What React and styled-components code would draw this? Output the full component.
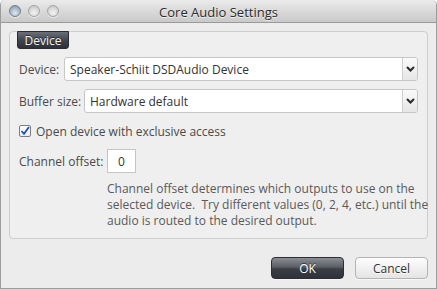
import React from "react";
import styled, { createGlobalStyle } from "styled-components";

const Global = createGlobalStyle`
  html, body { margin: 0; padding: 0; background: #ffffff; }
  body { font-family: "Open Sans", "DejaVu Sans", sans-serif; }
  * { box-sizing: border-box; }
`;

const Window = styled.div`
  width: 437px;
  height: 289px;
  display: flex;
  flex-direction: column;
  background: #ececec;
  border: 1px solid #9c9c9c;
  border-top: none;
  border-radius: 5px 5px 0 0;
  overflow: hidden;
`;

const TitleBar = styled.div`
  position: relative;
  height: 23px;
  flex: none;
  display: flex;
  align-items: center;
  justify-content: center;
  background: linear-gradient(#ebebeb, #d6d6d6 60%, #c9c9c9);
  border-bottom: 1px solid #9a9a9a;
`;

const Lights = styled.div`
  position: absolute;
  left: 8px;
  top: 5px;
  display: flex;
  gap: 7px;
`;

const Light = styled.span`
  width: 12px;
  height: 12px;
  border-radius: 50%;
  border: 1px solid ${(p) => (p.$active ? "#6f7e8e" : "#a3a3a3")};
  background: ${(p) =>
    p.$active
      ? "radial-gradient(circle at 50% 70%, #dfe7ef 0%, #a9b8c8 55%, #7f90a2 100%)"
      : "radial-gradient(circle at 50% 70%, #f2f2f2 0%, #d6d6d6 60%, #bdbdbd 100%)"};
  box-shadow: 0 1px 0 rgba(255, 255, 255, 0.6);
`;

const Title = styled.div`
  font-size: 13px;
  color: #2b2b2b;
  text-shadow: 0 1px 0 rgba(255, 255, 255, 0.7);
  margin-top: 1px;
`;

const Content = styled.div`
  flex: 1;
  display: flex;
  flex-direction: column;
  padding: 8px 8px 0 8px;
`;

const Group = styled.div`
  height: 208px;
  display: flex;
  flex-direction: column;
  border: 1px solid #cdcdcd;
  border-radius: 4px;
  background: #efefef;
  padding: 0 9px 9px 9px;
`;

const Tab = styled.div`
  align-self: flex-start;
  margin: -1px 0 0 -2px;
  width: 52px;
  height: 18px;
  display: flex;
  align-items: center;
  justify-content: center;
  font-size: 12px;
  color: #f4f4f4;
  background: linear-gradient(#6b6f77, #3f434b 55%, #2e3138);
  border: 1px solid #2a2c31;
  border-radius: 0 0 3px 3px;
  text-shadow: 0 -1px 0 rgba(0, 0, 0, 0.5);
`;

const Row = styled.div`
  display: flex;
  align-items: center;
  margin-top: ${(p) => p.$gap || 8}px;
  height: ${(p) => p.$h || 24}px;
`;

const Label = styled.div`
  font-size: 12px;
  color: #4a4a4a;
  width: ${(p) => p.$w}px;
  flex: none;
`;

const Select = styled.div`
  flex: 1;
  height: 24px;
  display: flex;
  align-items: stretch;
  background: #ffffff;
  border: 1px solid #c6c6c6;
  border-radius: 3px;
  overflow: hidden;
`;

const SelectText = styled.div`
  flex: 1;
  display: flex;
  align-items: center;
  padding-left: 5px;
  font-size: 12px;
  color: #333333;
`;

const Arrow = styled.div`
  width: 15px;
  flex: none;
  display: flex;
  align-items: center;
  justify-content: center;
  border-left: 1px solid #cfcfcf;
  background: linear-gradient(#fafafa, #e6e6e6);
`;

const CheckBox = styled.span`
  width: 12px;
  height: 12px;
  flex: none;
  border: 1px solid #7d7d7d;
  border-radius: 2px;
  background: linear-gradient(#ffffff, #ececec);
  display: flex;
  align-items: center;
  justify-content: center;
  margin-right: 5px;
`;

const CheckLabel = styled.span`
  font-size: 12px;
  color: #4a4a4a;
`;

const NumberBox = styled.div`
  width: 29px;
  height: 24px;
  background: #ffffff;
  border: 1px solid #c6c6c6;
  display: flex;
  align-items: center;
  justify-content: center;
  font-size: 12px;
  color: #333333;
`;

const Help = styled.p`
  margin: 8px 0 0 88px;
  font-size: 12px;
  line-height: 16px;
  color: #5a5a5a;
  white-space: nowrap;
`;

const Buttons = styled.div`
  display: flex;
  justify-content: flex-end;
  gap: 11px;
  margin-top: 18px;
  padding-right: 0px;
`;

const Button = styled.div`
  width: 73px;
  height: 22px;
  display: flex;
  align-items: center;
  justify-content: center;
  font-size: 12px;
  border-radius: 4px;
  color: ${(p) => (p.$primary ? "#ffffff" : "#333333")};
  border: 1px solid ${(p) => (p.$primary ? "#2c2e33" : "#b4b4b4")};
  background: ${(p) =>
    p.$primary
      ? "linear-gradient(#8a8d93, #5b5e65 45%, #3b3e45 55%, #30333a)"
      : "linear-gradient(#fdfdfd, #f1f1f1 50%, #e4e4e4)"};
  text-shadow: ${(p) => (p.$primary ? "0 -1px 0 rgba(0,0,0,0.5)" : "0 1px 0 rgba(255,255,255,0.8)")};
  box-shadow: 0 1px 0 rgba(255, 255, 255, 0.6);
`;

const Chevron = () => (
  <svg width="9" height="6" viewBox="0 0 9 6">
    <path d="M1 1 L4.5 4.5 L8 1" fill="none" stroke="#2a2a2a" strokeWidth="2" />
  </svg>
);

const Tick = () => (
  <svg width="10" height="10" viewBox="0 0 10 10">
    <path d="M1.5 5 L4 7.8 L9 1" fill="none" stroke="#1f4fc7" strokeWidth="1.8" />
  </svg>
);

export default function App() {
  return (
    <>
      <Global />
      <Window>
        <TitleBar>
          <Lights>
            <Light $active />
            <Light />
            <Light />
          </Lights>
          <Title>Core Audio Settings</Title>
        </TitleBar>
        <Content>
          <Group>
            <Tab>Device</Tab>
            <Row $gap={8}>
              <Label $w={45}>Device:</Label>
              <Select>
                <SelectText>Speaker-Schiit DSDAudio Device</SelectText>
                <Arrow><Chevron /></Arrow>
              </Select>
            </Row>
            <Row $gap={8}>
              <Label $w={65}>Buffer size:</Label>
              <Select>
                <SelectText>Hardware default</SelectText>
                <Arrow><Chevron /></Arrow>
              </Select>
            </Row>
            <Row $gap={12} $h={12}>
              <CheckBox><Tick /></CheckBox>
              <CheckLabel>Open device with exclusive access</CheckLabel>
            </Row>
            <Row $gap={12}>
              <Label $w={88}>Channel offset:</Label>
              <NumberBox>0</NumberBox>
            </Row>
            <Help>
              Channel offset determines which outputs to use on the
              <br />
              selected device.&nbsp; Try different values (0, 2, 4, etc.) until the
              <br />
              audio is routed to the desired output.
            </Help>
          </Group>
          <Buttons>
            <Button $primary>OK</Button>
            <Button>Cancel</Button>
          </Buttons>
        </Content>
      </Window>
    </>
  );
}
